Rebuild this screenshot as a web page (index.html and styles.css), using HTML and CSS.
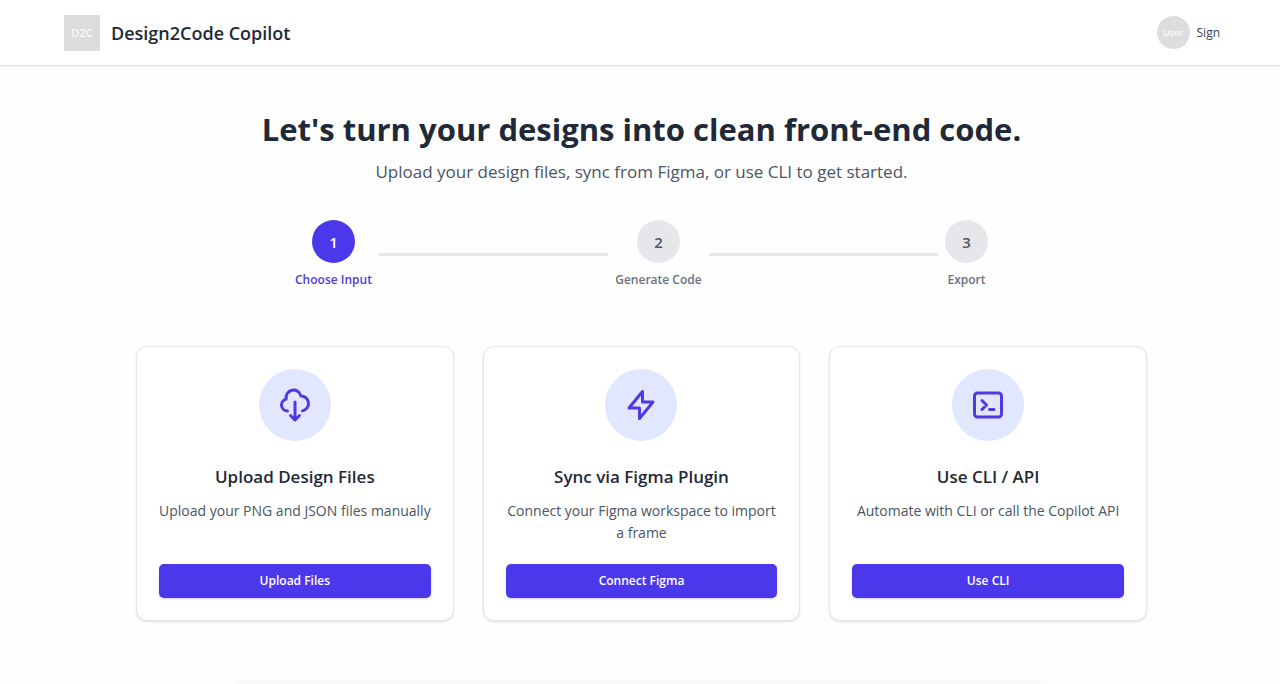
FILE: index.html
```html
<!DOCTYPE html>
<html lang="en">
<head>
<meta charset="utf-8">
<meta name="viewport" content="width=device-width, initial-scale=1">
<title>Design2Code Copilot</title>
<link rel="stylesheet" href="styles.css">
</head>
<body>
<header class="topbar">
  <div class="brand">
    <span class="brand-logo">D2C</span>
    <span class="brand-name">Design2Code Copilot</span>
  </div>
  <div class="account">
    <span class="avatar">User</span>
    <a class="sign-link" href="#">Sign</a>
  </div>
</header>
<main class="page">
  <h1 class="headline">Let's turn your designs into clean front-end code.</h1>
  <p class="subhead">Upload your design files, sync from Figma, or use CLI to get started.</p>

  <ol class="stepper">
    <li class="step step-active"><span class="step-dot">1</span><span class="step-label">Choose Input</span></li>
    <li class="step-line" aria-hidden="true"></li>
    <li class="step"><span class="step-dot">2</span><span class="step-label">Generate Code</span></li>
    <li class="step-line" aria-hidden="true"></li>
    <li class="step"><span class="step-dot">3</span><span class="step-label">Export</span></li>
  </ol>

  <section class="cards">
    <article class="card">
      <div class="card-icon">
        <svg viewBox="0 0 24 24" aria-hidden="true"><path d="M7 16a4 4 0 01-.88-7.903A5 5 0 1115.9 6L16 6a5 5 0 011 9.9M9 19l3 3m0 0l3-3m-3 3V10"/></svg>
      </div>
      <h2 class="card-title">Upload Design Files</h2>
      <p class="card-text">Upload your PNG and JSON files manually</p>
      <button class="card-button" type="button">Upload Files</button>
    </article>
    <article class="card">
      <div class="card-icon">
        <svg viewBox="0 0 24 24" aria-hidden="true"><path d="M13 10V3L4 14h7v7l9-11h-7z"/></svg>
      </div>
      <h2 class="card-title">Sync via Figma Plugin</h2>
      <p class="card-text">Connect your Figma workspace to import a frame</p>
      <button class="card-button" type="button">Connect Figma</button>
    </article>
    <article class="card">
      <div class="card-icon">
        <svg viewBox="0 0 24 24" aria-hidden="true"><path d="M8 9l3 3-3 3m5 0h3M5 20h14a2 2 0 002-2V6a2 2 0 00-2-2H5a2 2 0 00-2 2v12a2 2 0 002 2z"/></svg>
      </div>
      <h2 class="card-title">Use CLI / API</h2>
      <p class="card-text">Automate with CLI or call the Copilot API</p>
      <button class="card-button" type="button">Use CLI</button>
    </article>
  </section>

  <section class="panel"></section>
</main>
</body>
</html>
```
FILE: styles.css
```css
* { box-sizing: border-box; }

body {
  margin: 0;
  min-height: 100vh;
  display: flex;
  flex-direction: column;
  background: #fefefe;
  color: #1f2937;
  font-family: "Open Sans", "Noto Sans", sans-serif;
}

.topbar {
  display: flex;
  align-items: center;
  justify-content: space-between;
  height: 66px;
  padding: 0 60px 0 64px;
  background: #fff;
  border-bottom: 1px solid #e0e1e3;
  box-shadow: 0 1px 2px rgba(0, 0, 0, .06);
}

.brand { display: flex; align-items: center; gap: 11px; }

.brand-logo {
  display: grid;
  place-items: center;
  width: 36px;
  height: 36px;
  background: #ddd;
  color: #fafafa;
  font-size: 11px;
  font-weight: 600;
}

.brand-name { font-size: 18px; font-weight: 600; }

.account { display: flex; align-items: center; gap: 7px; }

.avatar {
  display: grid;
  place-items: center;
  width: 33px;
  height: 33px;
  border-radius: 50%;
  background: #ddd;
  color: #fafafa;
  font-size: 9px;
  font-weight: 600;
}

.sign-link { color: #374151; font-size: 12px; line-height: 18px; text-decoration: none; }

.page {
  flex: 1;
  display: flex;
  flex-direction: column;
  align-items: center;
  padding: 43px 0 0 3px;
}

.headline {
  margin: 0;
  font-size: 31px;
  line-height: 40px;
  font-weight: 700;
  text-align: center;
}

.subhead {
  margin: 10px 0 0;
  color: #4b5563;
  font-size: 17px;
  line-height: 26px;
  text-align: center;
}

.stepper {
  display: flex;
  align-items: center;
  width: 100%;
  max-width: 693px;
  margin: 35px 0 0;
  padding: 0;
  list-style: none;
}

.step {
  display: flex;
  flex-direction: column;
  align-items: center;
  gap: 8px;
  color: #6b7280;
}

.step-dot {
  display: grid;
  place-items: center;
  width: 43px;
  height: 43px;
  border-radius: 50%;
  background: #e5e7eb;
  color: #4b5563;
  font-size: 15px;
  font-weight: 600;
}

.step-label { font-size: 12px; line-height: 18px; font-weight: 600; }

.step-active { color: #4f3cd8; }
.step-active .step-dot { background: #4c38eb; color: #fff; }

.step-line { flex: 1; height: 3px; margin: 0 7px; background: #e5e7eb; }

.cards {
  display: grid;
  grid-template-columns: repeat(3, 1fr);
  gap: 29px;
  width: 100%;
  max-width: 1011px;
  margin-top: 57px;
}

.card {
  display: flex;
  flex-direction: column;
  align-items: center;
  padding: 22px;
  background: #fff;
  border: 1px solid #e5e7eb;
  border-radius: 11px;
  box-shadow: 0 1px 2px rgba(0, 0, 0, .12);
  text-align: center;
}

.card-icon {
  display: grid;
  place-items: center;
  width: 72px;
  height: 72px;
  border-radius: 50%;
  background: #e0e7ff;
}

.card-icon svg {
  width: 36px;
  height: 36px;
  fill: none;
  stroke: #4f39e0;
  stroke-width: 2;
  stroke-linecap: round;
  stroke-linejoin: round;
}

.card-title { margin: 23px 0 0; font-size: 17px; line-height: 26px; font-weight: 600; }

.card-text {
  margin: 10px 0 20px;
  color: #4b5563;
  font-size: 14px;
  line-height: 22px;
}

.card-button {
  width: 100%;
  height: 34px;
  margin-top: auto;
  border: 0;
  border-radius: 5px;
  background: #4c38eb;
  box-shadow: 0 1px 2px rgba(76, 56, 235, .25);
  color: #fff;
  font: 600 12px/20px "Open Sans", "Noto Sans", sans-serif;
}

.panel {
  flex: 1;
  width: 100%;
  max-width: 810px;
  margin-top: 58px;
  background: #f9fafb;
  border-radius: 7px 7px 0 0;
}
```
